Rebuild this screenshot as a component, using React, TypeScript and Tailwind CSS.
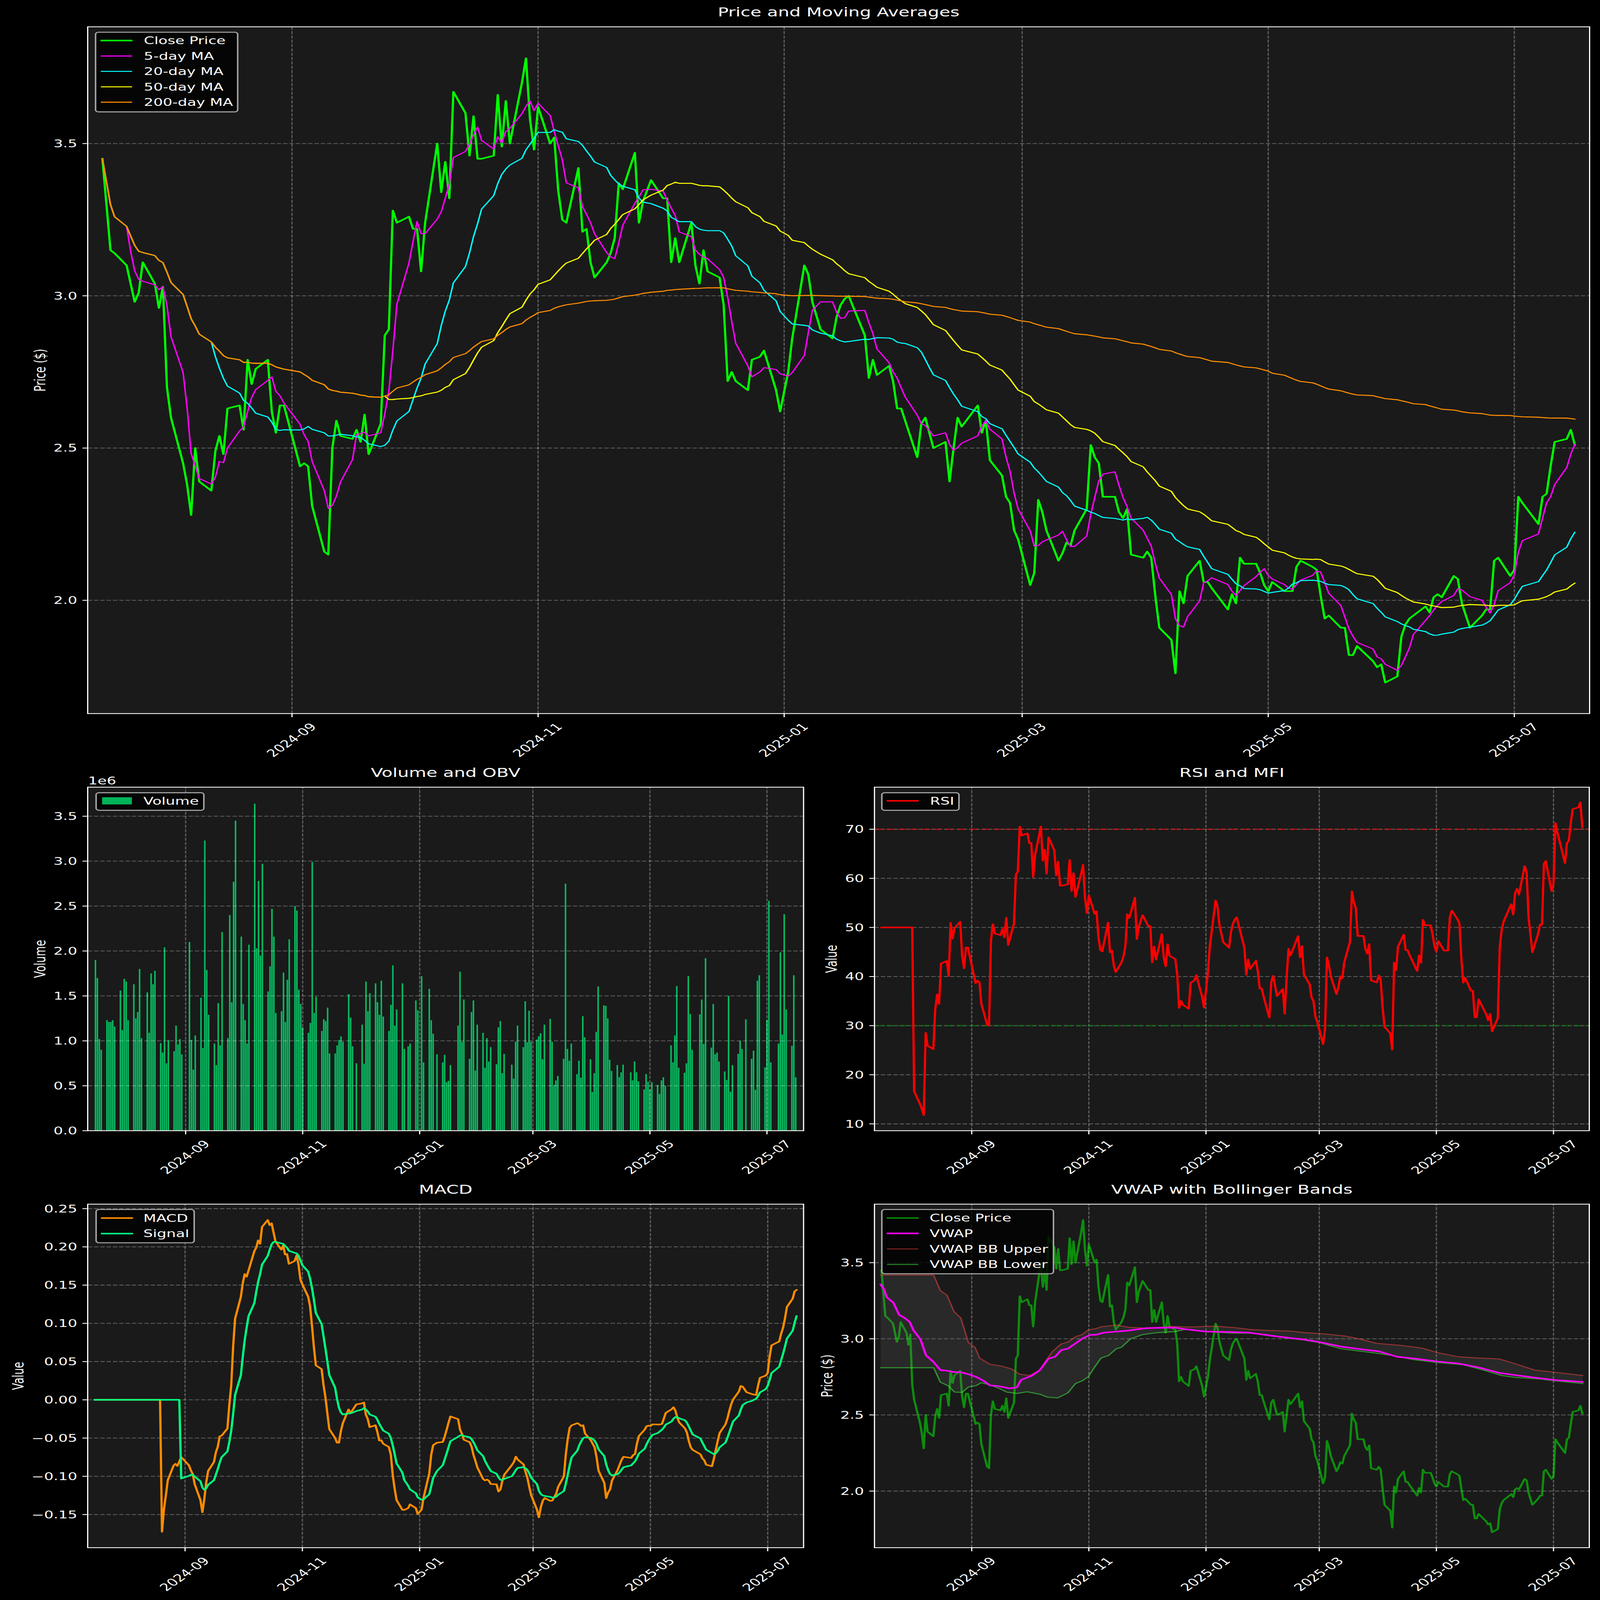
import React from "react";

type P = [number, number];
const D: [number, number, number][] = [
[0,3.45,1.90],[1,3.30,1.70],[2,3.15,1.02],[3,3.14,.90],[6,3.10,1.23],[7,3.04,1.21],[8,2.98,1.21],[9,3.01,1.23],[10,3.11,1.16],
[13,3.04,1.56],[14,2.96,1.12],[15,3.03,1.69],[16,2.70,1.66],[17,2.60,1.23],[20,2.45,1.63],[21,2.38,1.25],[22,2.28,1.32],[23,2.50,1.80],[24,2.39,1.03],
[27,2.36,1.54],[28,2.49,1.09],[29,2.54,1.75],[30,2.48,1.63],[31,2.63,1.78],[34,2.64,.975],[35,2.56,.87],[36,2.79,2.04],[37,2.71,.75],[38,2.76,1.01],
[41,2.79,.885],[42,2.62,1.17],[43,2.55,.96],[44,2.64,1.02],[45,2.64,.85],[49,2.44,2.10],[50,2.45,1.01],[51,2.44,.68],[52,2.31,1.06],
[55,2.16,1.48],[56,2.15,.92],[57,2.50,3.23],[58,2.59,1.79],[59,2.54,1.29],[62,2.53,.97],[63,2.56,.73],[64,2.52,1.42],[65,2.61,.95],[66,2.48,2.21],
[69,2.58,1.03],[70,2.87,2.40],[71,2.89,1.43],[72,3.28,2.77],[73,3.24,3.45],[76,3.26,2.16],[77,3.22,1.41],[78,3.22,1.23],[79,3.08,.97],[80,3.24,2.07],
[83,3.50,3.64],[84,3.34,2.03],[85,3.44,2.78],[86,3.32,1.95],[87,3.67,2.97],[90,3.60,1.55],[91,3.46,1.83],[92,3.59,2.47],[93,3.45,2.16],[94,3.45,1.31],
[97,3.46,1.33],[98,3.66,1.76],[99,3.49,1.21],[100,3.64,1.68],[101,3.50,2.13],[104,3.70,2.50],[105,3.78,2.45],[106,3.58,1.57],[107,3.48,1.41],[108,3.62,1.15],
[111,3.50,1.09],[112,3.52,1.20],[113,3.345,2.99],[114,3.25,1.31],[115,3.24,1.49],[118,3.42,1.11],[119,3.21,1.24],[120,3.22,1.22],[121,3.11,1.37],[122,3.06,.86],
[125,3.11,.86],[126,3.14,.95],[127,3.19,1.01],[128,3.37,1.05],[129,3.35,.99],[132,3.47,1.52],[133,3.24,1.26],[134,3.31,.94],[136,3.38,.75],
[139,3.32,1.18],[140,3.32,.745],[141,3.11,1.66],[142,3.19,1.33],[143,3.11,1.53],[146,3.24,1.64],[147,3.10,1.43],[148,3.04,1.29],[149,3.15,1.67],[150,3.08,1.27],
[153,3.06,1.11],[154,2.97,1.40],[155,2.72,1.84],[156,2.75,1.17],[157,2.72,1.35],[160,2.69,1.64],[161,2.79,.91],[163,2.80,.94],[164,2.82,.97],
[167,2.69,1.45],[168,2.62,1.34],[170,2.75,1.72],[171,2.86,.76],[174,3.10,1.58],[175,3.07,1.23],[176,2.98,1.08],[178,2.89,.85],
[181,2.86,.76],[182,2.93,.845],[183,2.97,.54],[184,2.99,.555],[185,3.00,.73],[189,2.87,1.17],[190,2.73,1.77],[191,2.79,.99],[192,2.74,1.46],
[195,2.77,.80],[196,2.72,1.32],[197,2.63,1.45],[198,2.63,.67],[199,2.59,1.18],[202,2.47,1.09],[203,2.58,.70],[204,2.60,1.03],[205,2.55,.77],[206,2.50,.93],
[209,2.52,.74],[210,2.39,1.15],[211,2.50,1.22],[212,2.60,.64],[213,2.57,.855],[217,2.64,.735],[218,2.55,.58],[219,2.59,.99],[220,2.46,1.17],
[223,2.41,.93],[224,2.34,1.44],[225,2.32,.985],[226,2.23,1.335],[227,2.20,.99],[230,2.05,1.015],[231,2.09,1.05],[232,2.33,1.085],[233,2.29,.795],[234,2.23,1.18],
[237,2.13,1.245],[238,2.155,.99],[239,2.19,.51],[240,2.18,.56],[241,2.23,.61],[244,2.30,.80],[245,2.51,2.75],[246,2.47,.91],[247,2.45,.78],[248,2.34,.97],
[251,2.34,.63],[252,2.29,.78],[253,2.27,.59],[254,2.30,1.275],[255,2.15,1.04],[258,2.14,.795],[259,2.16,.43],[260,2.14,.64],[261,2.015,1.10],[262,1.91,1.605],
[265,1.87,1.395],[266,1.76,1.39],[267,2.03,1.25],[268,1.99,.79],[269,2.08,.665],[272,2.13,.73],[273,2.06,.595],[274,2.06,.65],[275,2.04,.735],
[279,1.97,.65],[280,2.02,.56],[281,1.99,.77],[282,2.14,.65],[283,2.12,.55],[286,2.12,.46],[287,2.09,.63],[288,2.05,.545],[289,2.03,.46],[290,2.06,.54],
[293,2.03,.51],[294,2.03,.41],[295,2.03,.56],[296,2.11,.595],[297,2.13,.50],[300,2.11,.95],[301,2.10,.76],[302,2.015,1.06],[303,1.94,1.61],[304,1.95,.70],
[307,1.91,.645],[308,1.91,.75],[309,1.82,1.72],[310,1.82,1.30],[311,1.85,.90],[315,1.80,1.295],[316,1.78,1.46],[317,1.79,.965],[318,1.73,1.92],
[321,1.75,.925],[322,1.88,1.41],[323,1.92,.85],[324,1.94,.87],[325,1.95,.77],[328,1.98,.66],[329,1.96,.565],[330,2.01,1.50],[331,2.02,.435],[332,2.01,.73],
[335,2.08,.855],[336,2.07,1.00],[337,1.99,.91],[339,1.91,1.24],[342,1.95,.80],[343,1.97,.89],[344,1.97,.455],[345,2.13,1.67],[346,2.14,1.73],
[349,2.08,.705],[350,2.10,1.23],[351,2.34,2.56],[352,2.32,.76],[356,2.25,.97],[357,2.34,1.985],[358,2.35,1.07],[359,2.44,2.41],[360,2.52,1.35],
[363,2.53,.945],[364,2.56,1.73],[365,2.51,.595],
];

const days = D.map((r) => r[0]);
const close = D.map((r) => r[1]);

const rolling = (n: number) =>
  close.map((_, i) => {
    const s = close.slice(Math.max(0, i - n + 1), i + 1);
    return s.reduce((a, b) => a + b, 0) / s.length;
  });
const ema = (x: number[], span: number) => {
  const a = 2 / (span + 1);
  const out: number[] = [];
  x.forEach((v, i) => out.push(i === 0 ? v : a * v + (1 - a) * out[i - 1]));
  return out;
};
const e12 = ema(close, 12);
const e26 = ema(close, 26);
const macdRaw = close.map((_, i) => e12[i] - e26[i]).slice(25);
const sigRaw = ema(macdRaw, 9);
const macd = close.map((_, i) => (i < 25 ? 0 : macdRaw[i - 25]));
const signal = close.map((_, i) => (i < 33 ? 0 : sigRaw[i - 25]));
const rsi = (() => {
  let up = 0;
  let dn = 0;
  return close.map((c, i) => {
    const d = i === 0 ? 0 : c - close[i - 1];
    const u = Math.max(d, 0);
    const w = Math.max(-d, 0);
    if (i === 0) {
      up = u;
      dn = w;
    } else {
      up = up * (13 / 14) + u / 14;
      dn = dn * (13 / 14) + w / 14;
    }
    return i < 13 ? 50 : 100 - 100 / (1 + up / (dn || 1e-9));
  });
})();

const path = (pts: P[]) => "M" + pts.map((p) => `${p[0].toFixed(1)} ${p[1].toFixed(1)}`).join("L");
const series = (vals: number[], x0: number, k: number, y: (v: number) => number): P[] =>
  vals.map((v, i) => [x0 + days[i] * k, y(v)]);

const yMain = (v: number) => 1203 + (3 - v) * 1238.4;
const yVol = (v: number) => 4599 - v * 365.4;
const yRsi = (v: number) => 3373 + (70 - v) * 19.97;
const yMacd = (v: number) => 5693.7 - v * 3110;
const yVwap = (v: number) => 5445.5 + (3 - v) * 619.3;

const z = (pts: number[][]): P[] => pts.map((p) => [2235 + p[0] / 0.7016, 4800 + p[1] / 0.9186]);
const vwapLine = z([[158,390],[165,410],[170,438],[183,458],[194,503],[205,515],[215,530],[222,560],[236,595],[247,655],[262,680],[275,710],[288,712],[300,717],[315,718],[330,725],[345,735],[360,750],[372,767],[390,770],[410,778],[425,775],[433,747],[455,730],[470,710],[480,685],[487,667],[500,660],[512,635],[525,630],[540,610],[555,590],[570,578],[580,578],[595,570],[620,566],[640,563],[680,553],[700,552],[735,551],[750,556],[796,566],[850,568],[880,570],[930,583],[960,590],[985,595],[1018,605],[1060,622],[1100,632],[1135,640],[1170,660],[1210,668],[1250,678],[1290,685],[1330,700],[1370,720],[1400,728],[1440,738],[1480,747],[1534,754]]);
const upper = z([[158,355],[262,355],[275,413],[288,430],[302,492],[315,515],[330,607],[343,625],[352,665],[372,688],[395,695],[415,706],[430,725],[450,730],[470,710],[480,680],[495,640],[512,612],[525,605],[540,585],[552,578],[565,560],[580,555],[590,548],[620,542],[645,550],[680,553],[730,547],[760,549],[795,547],[815,546],[850,551],[880,558],[920,562],[960,564],[990,570],[1030,575],[1070,583],[1100,595],[1130,610],[1180,618],[1220,628],[1250,645],[1290,660],[1330,665],[1370,668],[1400,685],[1440,710],[1480,718],[1534,730]]);
const lower = z([[158,701],[262,701],[275,755],[290,768],[303,792],[318,793],[330,773],[345,768],[355,757],[372,765],[390,778],[405,792],[425,797],[445,791],[470,800],[485,811],[505,814],[525,795],[540,760],[553,750],[565,735],[575,705],[590,665],[605,655],[620,630],[630,625],[648,593],[670,578],[700,570],[735,566],[755,558],[790,565],[850,572],[890,572],[930,584],[985,597],[1018,607],[1060,630],[1130,647],[1160,655],[1200,670],[1250,682],[1300,690],[1340,710],[1375,730],[1400,737],[1450,743],[1480,750],[1534,760]]);

const LW = 4.1667;
const XT: [string, number][] = [["2024-09",47],["2024-11",108],["2025-01",169],["2025-03",228],["2025-05",289],["2025-07",350]];

type Entry = { label: string; color: string; w?: number; alpha?: number; patch?: boolean };
type Legend = { x: number; y: number; w: number; h: number; rows: number[]; textX: number; entries: Entry[] };
type Ax = { l: number; t: number; r: number; b: number };

const Txt = (p: React.SVGProps<SVGTextElement>) => <text fill="#ffffff" fontSize={41.67} {...p} />;

function Line({ pts, color, w, alpha = 1 }: { pts: P[]; color: string; w: number; alpha?: number }) {
  return <path d={path(pts)} fill="none" stroke={color} strokeWidth={w} strokeOpacity={alpha} strokeLinejoin="round" strokeLinecap="square" />;
}

function Chart({
  id, region, ax, x0, k, yt, title, ylabel, ylabelX, legend, offset, under, children,
}: {
  id: string; region: number[]; ax: Ax; x0: number; k: number; yt: [string, number][]; title: string; ylabel: string; ylabelX: number;
  legend: Legend; offset?: string; under?: React.ReactNode; children?: React.ReactNode;
}) {
  const { l, t, r, b } = ax;
  return (
    <svg viewBox={region.join(" ")} preserveAspectRatio="none" className="block h-full w-full">
      <clipPath id={id}><rect x={l} y={t} width={r - l} height={b - t} /></clipPath>
      <rect x={l} y={t} width={r - l} height={b - t} fill="#1a1a1a" />
      <g clipPath={`url(#${id})`}>
        {under}
        {XT.map(([s, d]) => (
          <line key={s} x1={x0 + d * k} x2={x0 + d * k} y1={b} y2={t} stroke="#ffffff" strokeOpacity={0.3} strokeWidth={3.33} strokeDasharray="12.3 5.3" />
        ))}
        {yt.map(([s, y]) => (
          <line key={s} x1={l} x2={r} y1={y} y2={y} stroke="#ffffff" strokeOpacity={0.3} strokeWidth={3.33} strokeDasharray="12.3 5.3" />
        ))}
        {children}
      </g>
      <rect x={l} y={t} width={r - l} height={b - t} fill="none" stroke="#ffffff" strokeWidth={3.33} />
      {XT.map(([s, d]) => {
        const x = x0 + d * k;
        return (
          <g key={s}>
            <line x1={x} x2={x} y1={b} y2={b + 14.6} stroke="#ffffff" strokeWidth={3.33} />
            <g transform={`translate(${x - 2} ${b + 107}) rotate(-45)`}>
              <Txt textAnchor="middle" y={15}>{s}</Txt>
            </g>
          </g>
        );
      })}
      {yt.map(([s, y]) => (
        <g key={s}>
          <line x1={l} x2={l - 14.6} y1={y} y2={y} stroke="#ffffff" strokeWidth={3.33} />
          <Txt textAnchor="end" x={l - 29.2} y={y + 15}>{s}</Txt>
        </g>
      ))}
      <Txt fontSize={50} textAnchor="middle" x={(l + r) / 2} y={t - 41.67}>{title}</Txt>
      <g transform={`translate(${ylabelX} ${(t + b) / 2}) rotate(-90)`}>
        <Txt textAnchor="middle">{ylabel}</Txt>
      </g>
      {offset && <Txt x={l + 1} y={t - 11}>{offset}</Txt>}
      <rect x={legend.x} y={legend.y} width={legend.w} height={legend.h} rx={8.3} fill="#000000" fillOpacity={0.8} stroke="#a6a6a6" strokeWidth={LW} />
      {legend.entries.map((e, i) => {
        const y = legend.rows[i];
        const hx = legend.x + 16.7;
        return (
          <g key={e.label}>
            {e.patch ? (
              <rect x={hx} y={y - 14.6} width={83.3} height={29.2} fill={e.color} fillOpacity={e.alpha ?? 1} />
            ) : (
              <line x1={hx} x2={hx + 83.3} y1={y} y2={y} stroke={e.color} strokeOpacity={e.alpha ?? 1} strokeWidth={e.w ?? LW} strokeLinecap="square" />
            )}
            <Txt x={legend.textX} y={y + 15}>{e.label}</Txt>
          </g>
        );
      })}
    </svg>
  );
}

const main: Ax = { l: 245, t: 109, r: 4441, b: 2902 };
const vol: Ax = { l: 245, t: 3202, r: 2245, b: 4599 };
const rs: Ax = { l: 2443, t: 3202, r: 4440, b: 4599 };
const mc: Ax = { l: 245, t: 4898, r: 2245, b: 6295 };
const vw: Ax = { l: 2443, t: 4898, r: 4440, b: 6295 };

export default function App() {
  const mx = 286.1;
  const mk = 11.27;
  return (
    <div className="flex h-screen w-screen flex-col overflow-hidden bg-black font-['DejaVu_Sans',sans-serif]">
      <div className="h-[47.641%] w-full">
        <Chart
          id="c1" region={[0, 0, 4470, 3100]} ax={main} x0={mx} k={mk}
          yt={[["2.0", yMain(2)], ["2.5", yMain(2.5)], ["3.0", yMain(3)], ["3.5", yMain(3.5)]]}
          title="Price and Moving Averages" ylabel="Price ($)" ylabelX={127}
          legend={{ x: 267, y: 131, w: 397, h: 324, rows: [164.7, 227.7, 290.4, 353, 415.7], textX: 402, entries: [
            { label: "Close Price", color: "#00ff00", w: 6.25 },
            { label: "5-day MA", color: "#ff00ff" },
            { label: "20-day MA", color: "#00ffff" },
            { label: "50-day MA", color: "#ffff00" },
            { label: "200-day MA", color: "#ff8c00" },
          ] }}
        >
          <Line pts={series(close, mx, mk, yMain)} color="#00ff00" w={6.25} />
          <Line pts={series(rolling(5), mx, mk, yMain)} color="#ff00ff" w={LW} />
          <Line pts={series(rolling(20), mx, mk, yMain)} color="#00ffff" w={LW} />
          <Line pts={series(rolling(50), mx, mk, yMain)} color="#ffff00" w={LW} />
          <Line pts={series(rolling(200), mx, mk, yMain)} color="#ff8c00" w={LW} />
        </Chart>
      </div>
      <div className="grid h-[26.126%] w-full grid-cols-[50.559%_49.441%]">
        <Chart
          id="c2" region={[0, 3100, 2260, 1700]} ax={vol} x0={266.7} k={5.36}
          yt={["0.0","0.5","1.0","1.5","2.0","2.5","3.0","3.5"].map((s) => [s, yVol(parseFloat(s))] as [string, number])}
          title="Volume and OBV" ylabel="Volume" ylabelX={127} offset="1e6"
          legend={{ x: 268.5, y: 3224.5, w: 301, h: 71.5, rows: [3257.5], textX: 400.5, entries: [{ label: "Volume", color: "#00ff7f", alpha: 0.7, patch: true }] }}
          under={D.map((r) => (
            <rect key={r[0]} x={266.7 + (r[0] - 0.4) * 5.36} width={4.29} y={yVol(r[2])} height={r[2] * 365.4} fill="#00ff7f" fillOpacity={0.7} />
          ))}
        />
        <Chart
          id="c3" region={[2260, 3100, 2210, 1700]} ax={rs} x0={2462.6} k={5.364}
          yt={[10,20,30,40,50,60,70].map((v) => [String(v), yRsi(v)] as [string, number])}
          title="RSI and MFI" ylabel="Value" ylabelX={2338}
          legend={{ x: 2463.5, y: 3224.5, w: 215.5, h: 71.5, rows: [3257.5], textX: 2598, entries: [{ label: "RSI", color: "#ff0000", w: 6.25 }] }}
        >
          <line x1={rs.l} x2={rs.r} y1={yRsi(70)} y2={yRsi(70)} stroke="#ff0000" strokeOpacity={0.5} strokeWidth={6.25} strokeDasharray="23.1 10" />
          <line x1={rs.l} x2={rs.r} y1={yRsi(30)} y2={yRsi(30)} stroke="#008000" strokeOpacity={0.5} strokeWidth={6.25} strokeDasharray="23.1 10" />
          <Line pts={series(rsi, 2462.6, 5.364, yRsi)} color="#ff0000" w={6.25} />
        </Chart>
      </div>
      <div className="grid h-[26.233%] w-full grid-cols-[50.559%_49.441%]">
        <Chart
          id="c4" region={[0, 4800, 2260, 1707]} ax={mc} x0={264.6} k={5.372}
          yt={[["\u22120.15",-0.15],["\u22120.10",-0.1],["\u22120.05",-0.05],["0.00",0],["0.05",0.05],["0.10",0.1],["0.15",0.15],["0.20",0.2],["0.25",0.25]].map((a) => [a[0] as string, yMacd(a[1] as number)] as [string, number])}
          title="MACD" ylabel="Value" ylabelX={66}
          legend={{ x: 268.5, y: 4919.6, w: 274, h: 135.4, rows: [4954.6, 5017.7], textX: 400.5, entries: [
            { label: "MACD", color: "#ff8c00", w: 6.25 },
            { label: "Signal", color: "#00ff7f", w: 6.25 },
          ] }}
        >
          <Line pts={series(macd, 264.6, 5.372, yMacd)} color="#ff8c00" w={6.25} />
          <Line pts={series(signal, 264.6, 5.372, yMacd)} color="#00ff7f" w={6.25} />
        </Chart>
        <Chart
          id="c5" region={[2260, 4800, 2210, 1707]} ax={vw} x0={2462.6} k={5.364}
          yt={["2.0","2.5","3.0","3.5"].map((s) => [s, yVwap(parseFloat(s))] as [string, number])}
          title="VWAP with Bollinger Bands" ylabel="Price ($)" ylabelX={2325}
          legend={{ x: 2463.5, y: 4919.6, w: 479.5, h: 261.4, rows: [4954, 5016.8, 5080, 5143], textX: 2597, entries: [
            { label: "Close Price", color: "#00ff00", w: 6.25, alpha: 0.5 },
            { label: "VWAP", color: "#ff00ff", w: 6.25 },
            { label: "VWAP BB Upper", color: "#ff4444", alpha: 0.5 },
            { label: "VWAP BB Lower", color: "#44ff44", alpha: 0.5 },
          ] }}
        >
          <Line pts={series(close, 2462.6, 5.364, yVwap)} color="#00ff00" w={6.25} alpha={0.5} />
          <path d={path(upper) + "L" + path([...lower].reverse()).slice(1) + "Z"} fill="#808080" fillOpacity={0.15} />
          <Line pts={upper} color="#ff4444" w={LW} alpha={0.5} />
          <Line pts={lower} color="#44ff44" w={LW} alpha={0.5} />
          <Line pts={vwapLine} color="#ff00ff" w={6.25} />
        </Chart>
      </div>
    </div>
  );
}
